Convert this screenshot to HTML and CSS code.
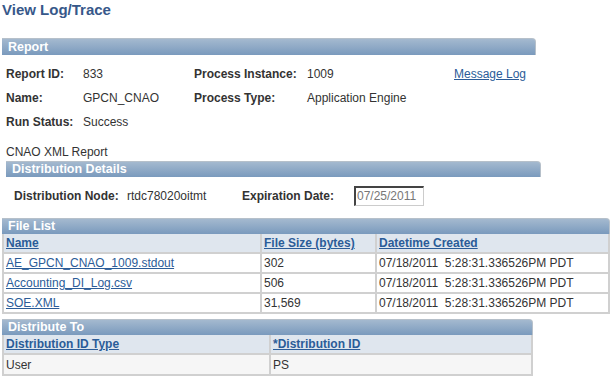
FILE: index.html
```html
<!DOCTYPE html>
<html>
<head>
<meta charset="utf-8">
<link rel="stylesheet" href="styles.css">
</head>
<body>
<h1 class="title">View Log/Trace</h1>

<div class="bar bar-report">Report</div>
<div class="report-grid">
  <span class="lbl">Report ID:</span><span>833</span>
  <span class="lbl">Process Instance:</span><span>1009</span>
  <a href="#" class="link">Message Log</a>
  <span class="lbl">Name:</span><span>GPCN_CNAO</span>
  <span class="lbl">Process Type:</span><span>Application Engine</span>
  <span></span>
  <span class="lbl">Run Status:</span><span>Success</span>
  <span></span><span></span><span></span>
</div>

<div class="subtitle">CNAO XML Report</div>
<div class="bar bar-dist">Distribution Details</div>
<div class="dist-row">
  <span class="lbl">Distribution Node:</span>
  <span>rtdc78020oitmt</span>
  <span class="lbl">Expiration Date:</span>
  <span class="input">07/25/2011</span>
</div>

<div class="grid-box files">
  <div class="bar">File List</div>
  <table>
    <colgroup><col class="c1"><col class="c2"><col class="c3"></colgroup>
    <tr class="head"><th><a href="#">Name</a></th><th><a href="#">File Size (bytes)</a></th><th><a href="#">Datetime Created</a></th></tr>
    <tr><td><a href="#">AE_GPCN_CNAO_1009.stdout</a></td><td>302</td><td>07/18/2011&nbsp; 5:28:31.336526PM PDT</td></tr>
    <tr><td><a href="#">Accounting_DI_Log.csv</a></td><td>506</td><td>07/18/2011&nbsp; 5:28:31.336526PM PDT</td></tr>
    <tr><td><a href="#">SOE.XML</a></td><td>31,569</td><td>07/18/2011&nbsp; 5:28:31.336526PM PDT</td></tr>
  </table>
</div>

<div class="grid-box dto">
  <div class="bar">Distribute To</div>
  <table>
    <colgroup><col class="d1"><col class="d2"></colgroup>
    <tr class="head"><th><a href="#">Distribution ID Type</a></th><th><a href="#">*Distribution ID</a></th></tr>
    <tr class="gray"><td>User</td><td>PS</td></tr>
  </table>
</div>
</body>
</html>
```

FILE: styles.css
```css
html, body {
  margin: 0;
  padding: 0;
  background: #fff;
}
body {
  font-family: "Liberation Sans", Arial, sans-serif;
  font-size: 12px;
  color: #333;
  width: 616px;
}
a {
  color: #2b5c98;
  text-decoration: underline;
}
.title {
  margin: 0;
  padding: 1px 0 0 2px;
  height: 37px;
  box-sizing: border-box;
  font-size: 15px;
  font-weight: bold;
  color: #37588a;
  line-height: 18px;
}
.bar {
  box-sizing: border-box;
  height: 16px;
  line-height: 15px;
  padding-left: 6px;
  color: #fff;
  font-weight: bold;
  font-size: 12.5px;
  background: linear-gradient(#a4b9cf, #7a9abd);
  border-top: 1px solid #b6c0ca;
  border-right: 1px solid #b6c0ca;
  border-top-right-radius: 4px;
}
.bar-report {
  margin: 1px 0 0 2px;
  width: 534px;
  height: 17px;
  line-height: 16px;
}
.report-grid {
  display: grid;
  grid-template-columns: 77px 111px 113px 147px auto;
  grid-auto-rows: 24px;
  align-items: center;
  padding: 7px 0 0 6px;
}
.lbl {
  font-weight: bold;
  color: #333;
}
.link {
  justify-self: start;
}
.subtitle {
  margin-top: 11px;
  padding-left: 6px;
  height: 14px;
  line-height: 14px;
}
.bar-dist {
  margin: 2px 0 0 6px;
  width: 535px;
}
.dist-row {
  display: grid;
  grid-template-columns: 113px 115px 112px 70px;
  align-items: center;
  padding: 9px 0 0 14px;
  height: 20px;
}
.input {
  box-sizing: border-box;
  height: 20px;
  line-height: 17px;
  padding-left: 1px;
  color: #777;
  border: 1px solid #ccc;
  border-top: 2px solid #444;
  border-left: 2px solid #444;
  background: #fff;
  white-space: nowrap;
}
.grid-box {
  margin-left: 2px;
}
.files {
  margin-top: 12px;
  width: 608px;
}
.dto {
  margin-top: 5px;
  width: 531px;
}
table {
  border-collapse: collapse;
  width: 100%;
  table-layout: fixed;
}
col.c1 { width: 258px; }
col.c2 { width: 115px; }
col.d1 { width: 267px; }
th, td {
  box-sizing: border-box;
  height: 20px;
  padding: 0 2px;
  text-align: left;
  border: 2px solid #d0d0d0;
  border-top: 0;
  white-space: nowrap;
  overflow: hidden;
}
th {
  height: 19px;
  background: #dfe6ee;
  font-weight: bold;
}
td {
  background: #fff;
}
tr.gray td {
  background: #f6f6f6;
  height: 21px;
}
th a {
  color: #2b5c98;
}
```
